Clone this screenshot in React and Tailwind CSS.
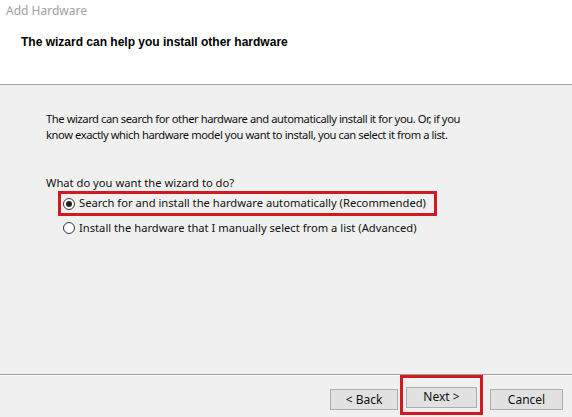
const Radio = ({ checked }) => (
    <span className="w-[12px] h-[12px] rounded-full border border-[#333] bg-white flex items-center justify-center shrink-0">
        {checked && <span className="w-[6px] h-[6px] rounded-full bg-[#222]" />}
    </span>
);

const Button = ({ label, className = "" }) => (
    <button className={`h-[21px] bg-[#e1e1e1] border border-[#adadad] text-[12px] text-[#111] ${className}`}>
        {label}
    </button>
);

export default function App() {
    return (
        <div
            className="w-[572px] h-[417px] bg-[#f0f0f0] flex flex-col overflow-hidden text-[11.2px] text-[#111]"
            style={{ fontFamily: '"Noto Sans", "Open Sans", sans-serif' }}
        >
            {/* header */}
            <div className="h-[85px] bg-white border-b border-[#a0a0a0] shrink-0">
                <div className="pl-[6px] pt-[2px] text-[12px] text-[#a0a0a0] leading-[18px]">Add Hardware</div>
                <div
                    className="pl-[21px] pt-[14px] font-bold text-[12px] text-black leading-[16px]"
                    style={{ fontFamily: '"Liberation Sans", Arial, sans-serif' }}
                >
                    The wizard can help you install other hardware
                </div>
            </div>

            {/* body */}
            <div className="flex-1 pl-[46px] pt-[26px] whitespace-nowrap">
                <p className="leading-[16px] tracking-[-0.43px]">
                    The wizard can search for other hardware and automatically install it for you. Or, if you
                    <br />
                    know exactly which hardware model you want to install, you can select it from a list.
                </p>
                <div className="mt-[32px] leading-[16px]">What do you want the wizard to do?</div>
                <div className="ml-[12px] w-[379px] h-[25px] border-[3px] border-[#cf1a22] flex items-center gap-[4px] pl-[2px]">
                    <Radio checked />
                    <span>Search for and install the hardware automatically (Recommended)</span>
                </div>
                <div className="ml-[17px] mt-[3px] flex items-center gap-[4px] leading-[17px]">
                    <Radio />
                    <span>Install the hardware that I manually select from a list (Advanced)</span>
                </div>
            </div>

            {/* footer */}
            <div className="h-[43px] shrink-0 border-t border-[#a0a0a0] shadow-[inset_0_1px_0_#fafafa] flex items-start justify-end pr-[9px]">
                <Button label="< Back" className="w-[68px] mt-[14px]" />
                <div className="ml-[2px] w-[83px] h-[40px] border-[3px] border-[#cf1a22] flex items-center justify-center">
                    <Button label="Next >" className="w-[71px] mt-[4px]" />
                </div>
                <Button label="Cancel" className="w-[73px] ml-[7px] mt-[14px]" />
            </div>
        </div>
    );
}
